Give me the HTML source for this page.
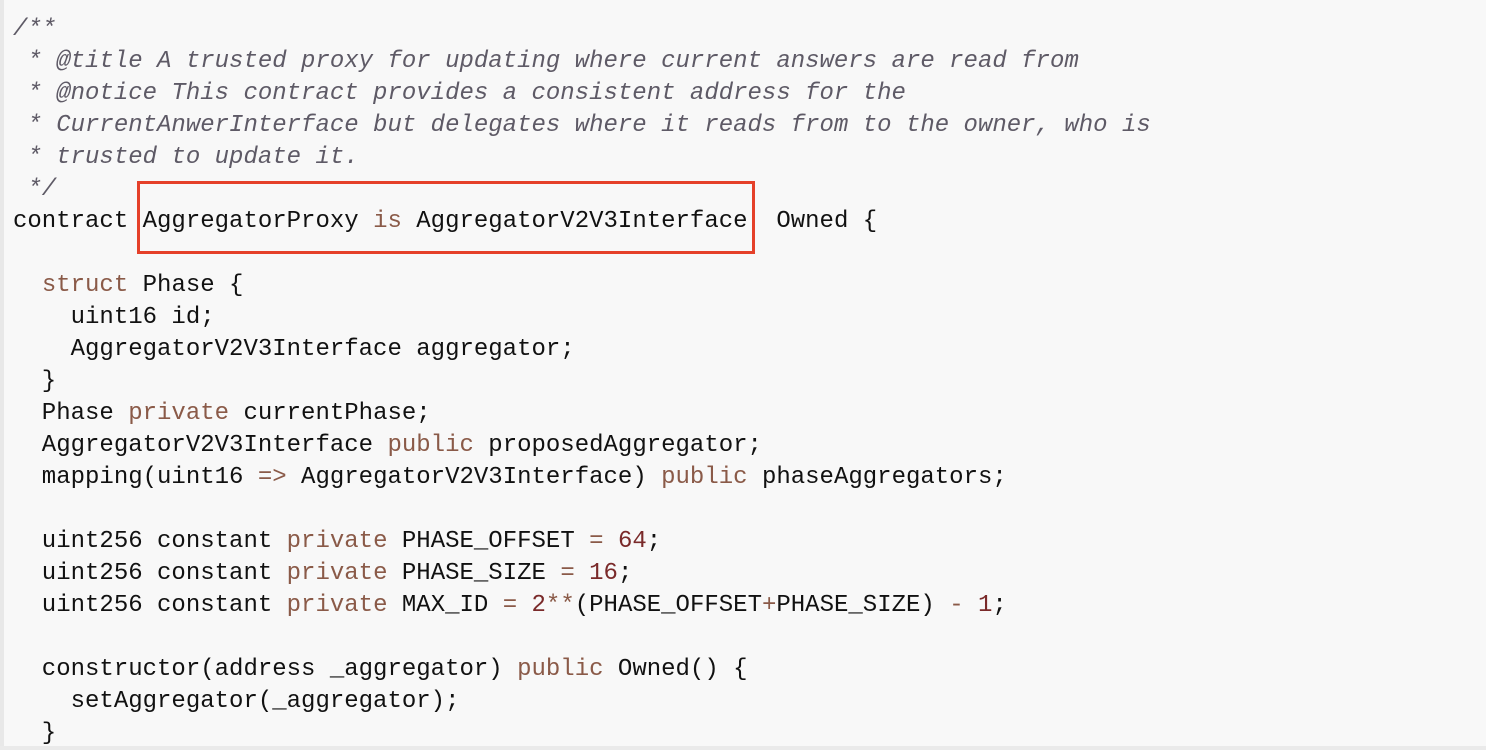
<!DOCTYPE html>
<html><head><meta charset="utf-8"><style>
html,body{margin:0;padding:0;}
body{width:1486px;height:750px;background:#f8f8f8;position:relative;overflow:hidden;}
.lb{position:absolute;left:0;top:0;width:4px;height:750px;background:#e8e8e8;}
.bb{position:absolute;left:0;top:746px;width:1486px;height:4px;background:#eaeaea;}
pre{position:absolute;left:13px;top:14px;margin:0;font-family:"Liberation Mono",monospace;font-size:24px;line-height:32px;color:#111;}
.c{color:#5e5a66;font-style:italic;}
.k{color:#8a5a48;}
.n{color:#7a2a2a;}
.box{position:absolute;left:137px;top:181px;width:612px;height:67px;border:3.5px solid #e5402a;}
</style></head><body>
<div class="lb"></div><div class="bb"></div>
<pre><span class="c">/**
 * @title A trusted proxy for updating where current answers are read from
 * @notice This contract provides a consistent address for the
 * CurrentAnwerInterface but delegates where it reads from to the owner, who is
 * trusted to update it.
 */</span>
contract AggregatorProxy <span class="k">is</span> AggregatorV2V3Interface  Owned {

  <span class="k">struct</span> Phase {
    uint16 id;
    AggregatorV2V3Interface aggregator;
  }
  Phase <span class="k">private</span> currentPhase;
  AggregatorV2V3Interface <span class="k">public</span> proposedAggregator;
  mapping(uint16 <span class="k">=&gt;</span> AggregatorV2V3Interface) <span class="k">public</span> phaseAggregators;

  uint256 constant <span class="k">private</span> PHASE_OFFSET <span class="k">=</span> <span class="n">64</span>;
  uint256 constant <span class="k">private</span> PHASE_SIZE <span class="k">=</span> <span class="n">16</span>;
  uint256 constant <span class="k">private</span> MAX_ID <span class="k">=</span> <span class="n">2</span><span class="k">**</span>(PHASE_OFFSET<span class="k">+</span>PHASE_SIZE) <span class="k">-</span> <span class="n">1</span>;

  constructor(address _aggregator) <span class="k">public</span> Owned() {
    setAggregator(_aggregator);
  }</pre>
<div class="box"></div>
</body></html>
